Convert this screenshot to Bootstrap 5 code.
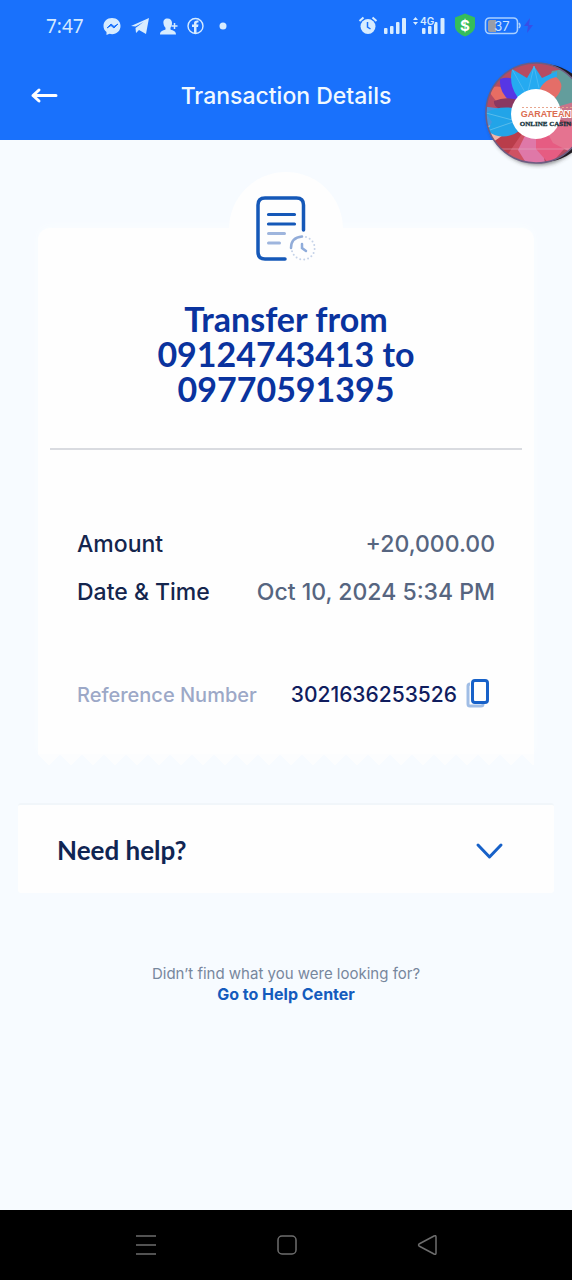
<!DOCTYPE html>
<html lang="en">
<head>
<meta charset="utf-8">
<meta name="viewport" content="width=device-width, initial-scale=1">
<title>Transaction Details</title>
<link href="https://cdn.jsdelivr.net/npm/bootstrap@5.3.0/dist/css/bootstrap.min.css" rel="stylesheet">
<style>
  body { font-family: Inter, "Liberation Sans", sans-serif; background: #f7fbff; color: #14254d; }
  svg { display: block; flex: none; }
  .app-header { background: #1971fc; color: #f1f9ff; }
  .status-bar { height: 52px; padding: 0 36px 0 46px; color: #d3e9ff; }
  .clock { font-family: "Noto Sans", sans-serif; font-size: 19px; line-height: 24px; margin-right: 18px; }
  .title-bar { display: grid; grid-template-columns: 40px 1fr 40px; align-items: center; height: 88px; padding: 0 24px; }
  .title-bar h1 { font-size: 23px; line-height: 28px; font-weight: 500; margin: 0; }
  .floating-ad { top: 50px; right: 0; }
  .receipt { margin: 88px 38px 0; background: #fefefe; border-radius: 12px 12px 0 0; padding: 0 12px 43px; box-shadow: 0 -2px 6px #fafdff; }
  .receipt-badge { width: 114px; height: 114px; margin: -56px auto 0; background: #fefefe; }
  .receipt h2 { font-family: Lato, sans-serif; font-weight: 700; font-size: 34px; line-height: 35px; color: #0a339e; margin: 15px auto 0; max-width: 270px; }
  .receipt hr { margin: 42px 0 0; border-top: 2px solid #d9dbe0; opacity: 1; }
  .facts { padding: 0 27px; margin: 78px 0 0; font-size: 23px; line-height: 32px; font-weight: 500; }
  .facts dt { font-weight: 500; }
  .facts dd { margin: 0; color: #566580; }
  .facts + .facts { margin-top: 71px; font-size: 21px; }
  .facts + .facts dt { color: #9ca8c7; font-size: 20px; }
  .facts + .facts dd { color: #101d5e; }
  .zigzag { height: 11px; margin: 0 38px; background: conic-gradient(from -45deg at 50% 100%, #fefefe 90deg, transparent 0) 0 0 / 22px 11px repeat-x; opacity: .7; }
  .help-card { margin: 38px 18px 0; background: #fefefe; border: 0; border-top: 2px solid #f1f6fa; border-radius: 3px; padding: 4px 50px 0 39px; height: 90px; color: #102553; font-family: Lato, sans-serif; font-size: 26px; line-height: 32px; font-weight: 700; }
  .help-card span { padding-bottom: 2px; }
  .support { margin-top: 71px; font-size: 15px; line-height: 20px; color: #77879d; }
  .support a { color: #145bbd; font-size: 16px; font-weight: 700; text-decoration: none; }
  .system-nav { background: #000; height: 70px; padding: 0 130px 0 132px; }
</style>
</head>
<body>
<div class="position-relative overflow-hidden min-vh-100 d-flex flex-column">
  <header class="app-header">
    <div class="status-bar d-flex align-items-center">
      <span class="clock">7:47</span>
      <svg width="130" height="24" viewBox="102 14 130 24" fill="#d7ecff" aria-hidden="true">
        <path d="M112 18c-5 0-8.500 3.500-8.500 8 0 2.500 1 4.500 3 6v3l3-1.200c6 1.500 11-2.200 11-7.800 0-4.500-3.500-8-8.500-8z"/>
        <path d="m107 28 4-4 3 2.500 4-2.500-4 4-3-2.500z" stroke="#1971fc" fill="#1971fc"/>
        <path d="m131 26 18-8-3 16-7-4-3 3-.5-5 8-6-8 4.500z"/>
        <path d="M167.500 18.500c-3 0-4.500 2-4 5 .3 2 1 3.500 2 4.300v1.700c-3 1-5.500 2-5.500 5h16c0-3-2.500-4-5.500-5v-1.700c2-2 3-9.300-3-9.300z"/>
        <path d="M174.500 23v6m-3-3h6" stroke="#d7ecff" stroke-width="1.500"/>
        <circle cx="195.500" cy="26" r="7.500" fill="none" stroke="#d7ecff" stroke-width="1.400"/>
        <path d="M194 33v-6h-2v-2.500h2V23q0-3 4.500-2.500v2q-2-.3-2 1v1h2l-.5 2.500h-1.500v6z"/>
        <circle cx="223" cy="26" r="3.500"/>
      </svg>
      <svg class="ms-auto" width="180" height="28" viewBox="356 12 180 28" aria-hidden="true">
        <circle cx="368" cy="26.500" r="7.500" fill="#d7ecff"/>
        <path d="m359.500 21 4-3.500m9 0 4 3.500" stroke="#d7ecff" stroke-width="2"/>
        <path d="M367.500 22v5l3 2" fill="none" stroke="#1971fc" stroke-width="1.500"/>
        <g fill="#d7ecff">
          <rect x="384" y="28" width="3.500" height="6" rx="1"/><rect x="390" y="26" width="3.500" height="8" rx="1"/><rect x="396" y="22" width="3.500" height="12" rx="1"/><rect x="402" y="18" width="4" height="16" rx="1"/>
          <rect x="422" y="28" width="3.500" height="6" rx="1"/><rect x="428" y="26" width="3.500" height="8" rx="1"/><rect x="434" y="22" width="3.500" height="12" rx="1"/><rect x="440.500" y="18" width="4" height="16" rx="1"/>
          <path d="m413 20 2.500-3 2.500 3zm0 2 2.500 3 2.500-3z"/>
          <text x="420" y="25" font-size="10" font-weight="600" stroke="#1971fc" stroke-width="2" paint-order="stroke">4G</text>
        </g>
        <path d="m465 13.500 10 4V27q-1 6-10 9.500-9-3.500-10-9.500v-9.500z" fill="#35bd5b"/>
        <text x="465" y="31" text-anchor="middle" font-size="15" font-weight="700" fill="#fff">$</text>
        <path d="M490 20h6v12h-6q-2 0-2-2v-8q0-2 2-2z" fill="#9b9da6"/>
        <rect x="485.500" y="18" width="32" height="15.500" rx="4" fill="none" stroke="#a9d0ff" stroke-width="1.600"/>
        <path d="M519 23q2 2.500 0 5" fill="none" stroke="#a9d0ff" stroke-width="1.500"/>
        <text x="502" y="30.500" text-anchor="middle" font-size="13" fill="#c9e2ff">37</text>
        <path d="m530 18-6 8h4l-1 7 6-8h-4z" fill="#384fe6"/>
      </svg>
    </div>
    <div class="title-bar">
      <button type="button" class="btn p-0 border-0 text-start" aria-label="Back">
        <svg width="40" height="28" viewBox="24 82 40 28" fill="none" stroke="#fff" stroke-width="3" stroke-linecap="round" stroke-linejoin="round"><path d="M56 95.500H33m6-5.500-6 5.500 6 5.500"/></svg>
      </button>
      <h1 class="text-center">Transaction Details</h1>
    </div>
  </header>

  <a href="#casino" class="floating-ad position-absolute" aria-label="Garatean Online Casino">
    <svg width="110" height="130" viewBox="0 0 110 130">
      <defs>
        <clipPath id="disc"><circle cx="74" cy="63" r="50"/></clipPath>
        <filter id="soft" x="-20%" y="-20%" width="140%" height="140%"><feGaussianBlur stdDeviation="2"/></filter>
      </defs>
      <circle cx="76" cy="65" r="50" fill="#333" opacity=".6" filter="url(#soft)"/>
      <circle cx="81" cy="63" r="49" fill="#211b21"/>
      <path d="m97 18 13 10v10z" fill="#d7a235"/>
      <g clip-path="url(#disc)">
        <rect width="130" height="130" fill="#b64c62"/>
        <path d="M74 63 10 55v45z" fill="#4896df"/>
        <path d="M74 63 18 78l8 32z" fill="#efb7aa"/>
        <path d="M74 63 22 98l28 22z" fill="#b93d4a"/>
        <path d="M74 63 46 104l2 16h26z" fill="#cf5163"/>
        <path d="M74 63 56 100l10 16 17-3z" fill="#df78a8"/>
        <path d="M74 63v36l14 16 14-16z" fill="#e65c82"/>
        <path d="m74 63 17 30 19 10V76z" fill="#e57390"/>
        <path d="m74 63 36-23v33z" fill="#c8748b"/>
        <path d="m74 63 16-42 25-4v34z" fill="#639d9c"/>
        <path d="M74 63Q36 65 26 38q23-8 48 25" fill="#e86d63"/>
        <path d="M74 63Q36 53 38 29q21-8 36 34" fill="#5636e5"/>
        <path d="M74 63Q44 45 50 19l15 9 7-12 8 12 15-7q1 22-21 42" fill="#25aaf1"/>
        <path d="M74 63Q72 32 94 27q17 13-20 36" fill="#e46e68"/>
        <path d="M74 63Q54 42 32 51q-2 13 42 12" fill="#8a3861"/>
        <path d="M74 63Q40 52 24 63l6 9-5 9q25 17 49-18" fill="#22a4e8"/>
        <path d="m50 19 15 27 7-30 5 22" fill="none" stroke="#5fc2f5" opacity=".6"/>
        <path d="m24 63 30 8-29 10" fill="none" stroke="#7dcbed" opacity=".6"/>
        <path d="M27 99h83" stroke="#ddb3c7" opacity=".5"/>
      </g>
      <circle cx="74" cy="63" r="50" fill="none" stroke="#6e5d82" stroke-width="1.500"/>
      <circle cx="74" cy="64" r="25" fill="#fff"/>
      <path d="M60 57.500h50" stroke="#e8a68f" stroke-dasharray="2 2"/>
      <text x="109" y="67" text-anchor="end" font-family="Liberation Sans, sans-serif" font-weight="700" font-size="9" fill="#db6c50" stroke="#fff" stroke-width="2" paint-order="stroke">GARATEAN</text>
      <text x="109" y="76" text-anchor="end" font-family="Liberation Serif, serif" font-weight="700" font-size="7" fill="#15343c" stroke="#15343c" stroke-width=".3">ONLINE CASIN</text>
    </svg>
  </a>

  <main class="flex-grow-1">
    <section class="receipt text-center">
      <div class="d-flex flex-column">
        <div class="receipt-badge rounded-circle d-flex justify-content-center align-items-center">
          <svg width="114" height="114" viewBox="229 172 114 114" fill="none" stroke="#1558b8" stroke-linecap="round" aria-hidden="true">
            <path d="M303.500 230v-25q0-7-7-7H265q-7 0-7 7v47q0 7 7 7h20" stroke-width="3.500"/>
            <path d="M268.500 214.500h26m-26 9.500h26" stroke-width="3.200"/>
            <path d="M268.500 233.500h16m-16 9.500h11" stroke="#9eb5dd" stroke-width="3"/>
            <path d="M291 248q0-10.500 11-11.500" stroke="#92acd8" stroke-width="2.500"/>
            <path d="M306 237a11.500 11.500 0 1 1-14 14" stroke="#c5d2e8" stroke-width="2" stroke-dasharray="0 4"/>
            <path d="M302 244v4l4 3" stroke="#8facda" stroke-width="2.500"/>
          </svg>
        </div>
        <h2>Transfer from 09124743413 to 09770591395</h2>
      </div>
      <hr>
      <dl class="facts">
        <div class="d-flex justify-content-between mb-3"><dt>Amount</dt><dd>+20,000.00</dd></div>
        <div class="d-flex justify-content-between"><dt>Date &amp; Time</dt><dd>Oct 10, 2024 5:34 PM</dd></div>
      </dl>
      <dl class="facts mb-0">
        <div class="d-flex justify-content-between">
          <dt>Reference Number</dt>
          <dd class="d-flex align-items-center">3021636253526
            <button type="button" class="btn p-0 border-0 ms-2 me-1" aria-label="Copy reference number">
              <svg width="26" height="32" viewBox="464 680 26 32" fill="none"><path d="M469 685q-2 0-2 2v18q0 2 2 2h11q2 0 2-2" stroke="#a0bde5" stroke-width="3"/><rect x="471.500" y="681.500" width="15" height="22" rx="2.500" stroke="#1761c8" stroke-width="3"/></svg>
            </button>
          </dd>
        </div>
      </dl>
    </section>
    <div class="zigzag"></div>

    <div class="d-grid">
      <button type="button" class="help-card d-flex justify-content-between align-items-center">
        <span>Need help?</span>
        <svg width="30" height="20" viewBox="474 841 30 20" fill="none" stroke="#1761c8" stroke-width="3" stroke-linecap="round" stroke-linejoin="round" aria-hidden="true"><path d="m478 845 11.500 12 11.500-12"/></svg>
      </button>
    </div>

    <div class="support text-center pb-4">
      Didn’t find what you were looking for?<br>
      <a href="#help-center">Go to Help Center</a>
    </div>
  </main>

  <nav class="system-nav d-flex justify-content-between align-items-center" aria-label="System">
    <button type="button" class="btn p-0 border-0" aria-label="Recent apps"><svg width="28" height="28" viewBox="0 0 28 28" stroke="#6d6d6d" stroke-width="1.500"><path d="M4 5h20M4 14h20M4 23h20"/></svg></button>
    <button type="button" class="btn p-0 border-0" aria-label="Home"><svg width="28" height="28" viewBox="0 0 28 28" fill="none" stroke="#6d6d6d" stroke-width="1.500"><rect x="5" y="5" width="18" height="18" rx="4"/></svg></button>
    <button type="button" class="btn p-0 border-0" aria-label="Back"><svg width="28" height="28" viewBox="0 0 28 28" fill="none" stroke="#6d6d6d" stroke-width="1.500" stroke-linejoin="round"><path d="M5 13q-1 1 0 2l15 8q2 1 2-1V6q0-2-2-1z"/></svg></button>
  </nav>
</div>
<script src="https://cdn.jsdelivr.net/npm/bootstrap@5.3.0/dist/js/bootstrap.bundle.min.js"></script>
</body>
</html>
